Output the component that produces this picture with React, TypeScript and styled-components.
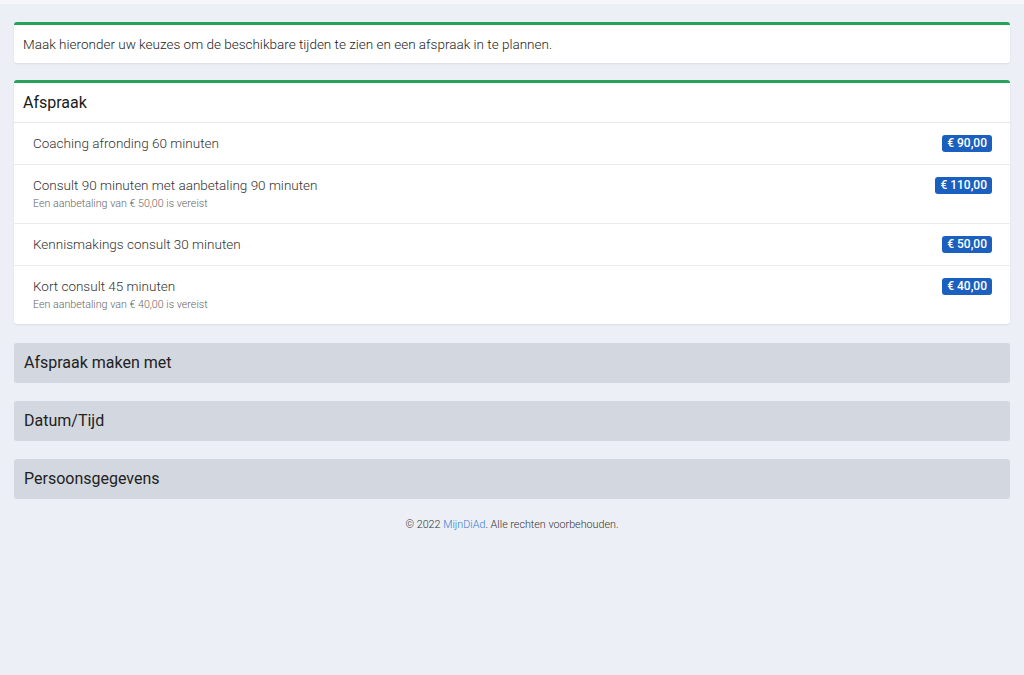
import styled, { createGlobalStyle } from "styled-components";

const GlobalStyle = createGlobalStyle`
  html, body {
    margin: 0;
    padding: 0;
    background: #eceff5;
    font-family: Roboto, "Liberation Sans", sans-serif;
    color: #212529;
  }
`;

const TopStrip = styled.div`
  height: 4px;
  background: #f4f6fa;
`;

const Page = styled.main`
  padding: 18px 14px 0 14px;
  display: flex;
  flex-direction: column;
`;

const Card = styled.section<{ $gap: number }>`
  background: #fff;
  border-top: 3px solid #27a25a;
  border-radius: 3px;
  box-shadow: 0 1px 2px rgba(0, 0, 0, 0.08);
  margin-bottom: ${(p) => p.$gap}px;
`;

const Intro = styled.p`
  margin: 0;
  padding: 11px 9px 11px 9px;
  font-size: 13.5px;
  line-height: 16px;
  font-weight: 300;
  color: #1c1c1c;
`;

const CardHeader = styled.h2`
  margin: 0;
  padding: 10px 9px 10px 9px;
  font-size: 16px;
  line-height: 19px;
  font-weight: 400;
  color: #1a1a1a;
  border-bottom: 1px solid #e6e8ec;
`;

const List = styled.ul`
  list-style: none;
  margin: 0;
  padding: 0;
`;

const Item = styled.li`
  display: flex;
  justify-content: space-between;
  align-items: flex-start;
  padding: 12px 18px 12px 19px;
  border-bottom: 1px solid #e9ebef;
  &:last-child {
    border-bottom: 0;
  }
`;

const ItemText = styled.div`
  display: flex;
  flex-direction: column;
  gap: 3px;
`;

const Title = styled.span`
  font-size: 13.5px;
  font-weight: 300;
  color: #333;
  line-height: 17px;
`;

const Note = styled.span`
  font-size: 10.7px;
  line-height: 14px;
  font-weight: 300;
  color: #666;
`;

const Price = styled.span`
  background: #1b5fbf;
  color: #fff;
  font-size: 12px;
  font-weight: 500;
  padding: 1px 5px;
  line-height: 15px;
  border-radius: 3px;
`;

const Step = styled.div`
  background: #d3d7e0;
  border-radius: 3px;
  padding: 10px 10px 11px 10px;
  font-size: 16px;
  color: #222;
  margin-bottom: 18px;
  line-height: 19px;
`;

const Footer = styled.footer`
  text-align: center;
  font-size: 10.75px;
  font-weight: 300;
  color: #333;
  padding-top: 1px;
`;

const Link = styled.a`
  color: #3a7bd5;
  text-decoration: none;
`;

const services = [
  { title: "Coaching afronding 60 minuten", price: "€ 90,00" },
  {
    title: "Consult 90 minuten met aanbetaling 90 minuten",
    price: "€ 110,00",
    note: "Een aanbetaling van € 50,00 is vereist",
  },
  { title: "Kennismakings consult 30 minuten", price: "€ 50,00" },
  {
    title: "Kort consult 45 minuten",
    price: "€ 40,00",
    note: "Een aanbetaling van € 40,00 is vereist",
  },
];

export default function App() {
  return (
    <>
      <GlobalStyle />
      <TopStrip />
      <Page>
        <Card $gap={17}>
          <Intro>
            Maak hieronder uw keuzes om de beschikbare tijden te zien en een
            afspraak in te plannen.
          </Intro>
        </Card>
        <Card $gap={19}>
          <CardHeader>Afspraak</CardHeader>
          <List>
            {services.map((s) => (
              <Item key={s.title}>
                <ItemText>
                  <Title>{s.title}</Title>
                  {s.note && <Note>{s.note}</Note>}
                </ItemText>
                <Price>{s.price}</Price>
              </Item>
            ))}
          </List>
        </Card>
        <Step>Afspraak maken met</Step>
        <Step>Datum/Tijd</Step>
        <Step>Persoonsgegevens</Step>
        <Footer>
          © 2022 <Link href="#">MijnDiAd</Link>. Alle rechten voorbehouden.
        </Footer>
      </Page>
    </>
  );
}
